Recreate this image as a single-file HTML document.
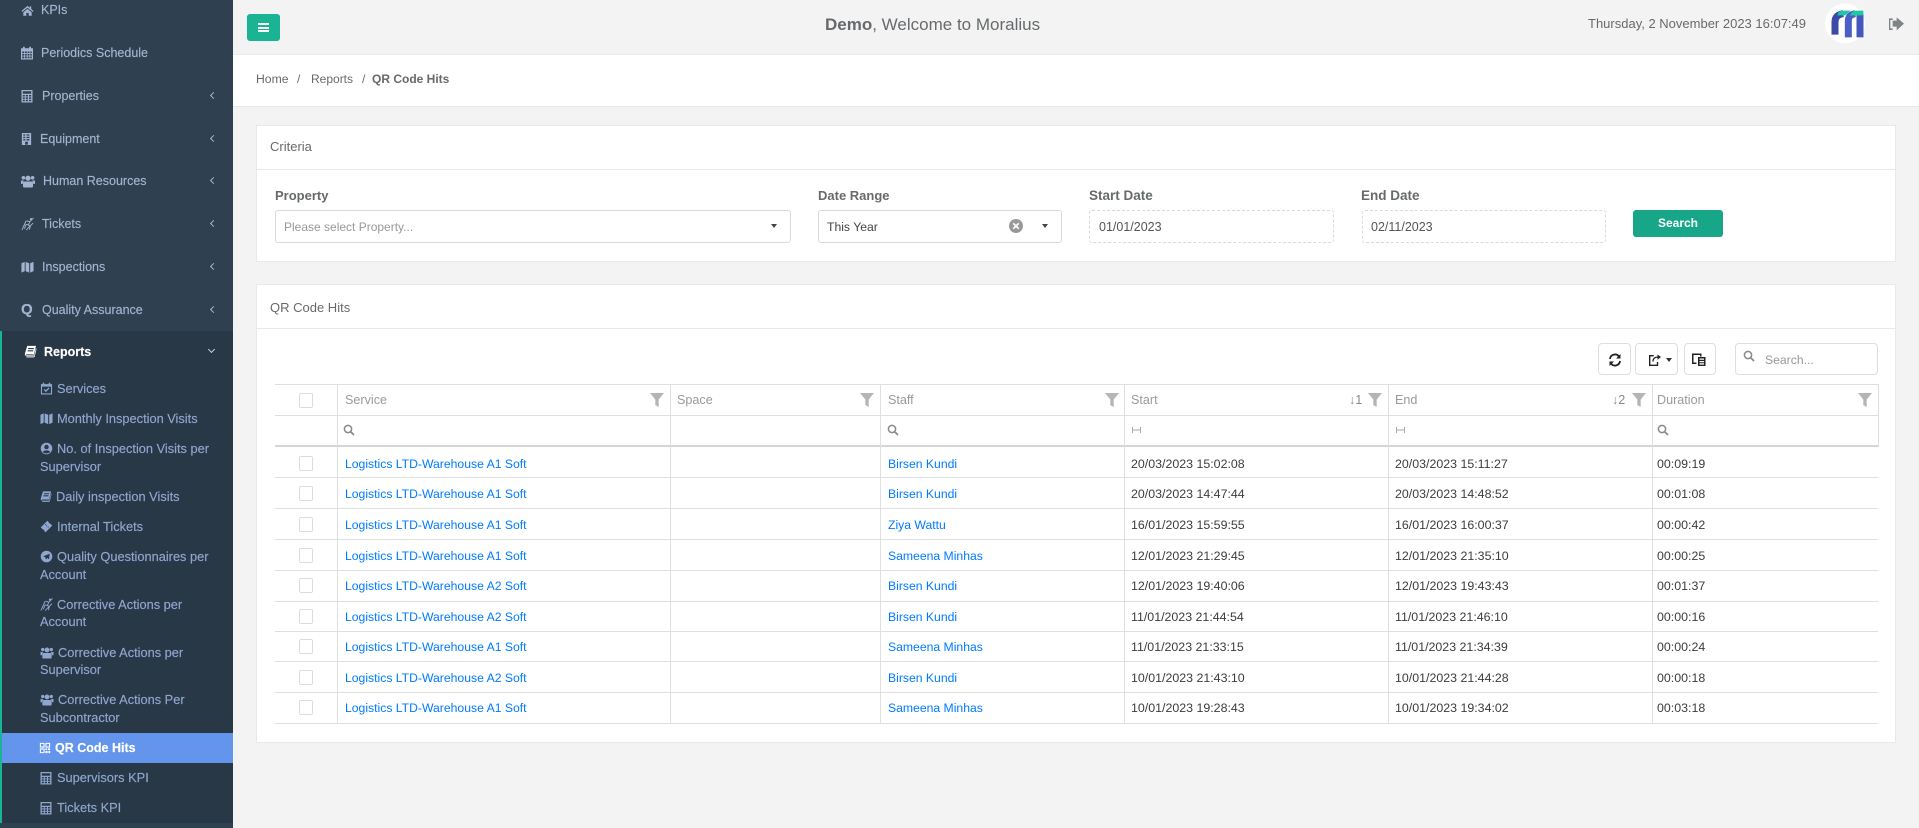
<!DOCTYPE html>
<html><head><meta charset="utf-8"><title>QR Code Hits</title>
<style>
*{box-sizing:border-box}
html,body{margin:0;padding:0;width:1919px;height:828px;overflow:hidden;background:#f3f3f4;font-family:"Liberation Sans",sans-serif;font-size:13px;color:#676a6c}
.a{position:absolute;white-space:nowrap}
svg{position:absolute;display:block;fill:currentColor}
#side{position:absolute;left:0;top:0;width:233px;height:828px;background:#2f4050;overflow:hidden}
#act{position:absolute;left:0;top:331px;width:233px;height:492px;background:#293846;border-left:2px solid #1ab394}
.m{position:absolute;white-space:nowrap;line-height:18px;color:#a3b4d0;font-size:12.5px;-webkit-text-stroke:.15px}
.s{position:absolute;white-space:nowrap;line-height:18px;color:#8fa6cf;font-size:12.8px;-webkit-text-stroke:.15px}
.ic{color:#a3b4d0}
.si{color:#8fa6cf}
.chev{position:absolute;left:211px;width:5px;height:5px;border-left:1.2px solid #a3b4d0;border-bottom:1.2px solid #a3b4d0;transform:rotate(45deg)}
.card{position:absolute;left:256px;width:1640px;background:#fff;border:1px solid #e7eaec}
.ch{position:absolute;left:0;right:0;top:0;border-bottom:1px solid #e7eaec}
.lbl{font-weight:bold;line-height:18px;top:187px}
.inp{position:absolute;background:#fff;top:210px;height:33px;border:1px solid #d9d9d9;border-radius:3px}
.dash{border:1px dashed #d9d9d9}
.caret{position:absolute;width:0;height:0;border-left:3.5px solid transparent;border-right:3.5px solid transparent;border-top:4px solid #444}
.v{position:absolute;top:384px;width:1px;height:340px;background:#dfdfdf}
.hl{position:absolute;left:275px;width:1603px;height:1px;background:#dfdfdf}
.th{position:absolute;top:390px;line-height:20px;color:#9a9a9a;white-space:nowrap;font-size:12.6px}
.f{color:#b5b5b5;width:14px;height:14px;top:393px}
.q{color:#8a8a8a;width:12px;height:12px;top:424px}
.r{position:absolute;left:0;width:1919px}
.r span{position:absolute;white-space:nowrap;line-height:18px;top:8px;color:#3c3c3c;font-size:12.4px}
.r span.l{color:#007bff;font-size:12.2px}
.r i{position:absolute;left:299px;top:9px;width:14px;height:15px;border:1px solid #dcdcdc;border-radius:2px;background:#fff}
.btn{position:absolute;top:343px;height:32px;border:1px solid #dedede;border-radius:4px;background:#fff}
</style></head><body>

<svg width="0" height="0" style="position:absolute">
<defs>
<symbol id="home" viewBox="0 0 14 14"><path d="M7 2L.5 7.500l.9 1L7 4l5.600 4.500.9-1L11 5.400V2.600H9.400v1.500zM2.500 9L7 5.300 11.500 9v3.600H8.300V9.600H5.700v3H2.500z"/></symbol>
<symbol id="cal" viewBox="0 0 14 14"><path fill-rule="evenodd" d="M3 .8h1.800V2.300h4.400V.8H11v1.500h2v11.200H1V2.300h2zM2.200 5.500v1.600h2V5.500zM5 5.500v1.600h1.800V5.500zM7.600 5.500v1.600h1.800V5.500zM10.200 5.500v1.600h1.600V5.500zM2.200 8v1.600h2V8zM5 8v1.600h1.800V8zM7.600 8v1.600h1.800V8zM10.200 8v1.600h1.600V8zM2.200 10.500v1.800h2v-1.800zM5 10.500v1.800h1.800v-1.800zM7.600 10.500v1.800h1.800v-1.800zM10.200 10.500v1.800h1.600v-1.800z"/></symbol>
<symbol id="calc" viewBox="0 0 14 14"><path fill-rule="evenodd" d="M1.500 1h11v12.500h-11zM2.800 2.300v2.400h8.400V2.300zM2.800 6v1.500h2V6zM5.800 6v1.500h2.200V6zM9 6v1.500h2.200V6zM2.800 8.400v1.500h2V8.400zM5.800 8.400v1.500h2.200V8.400zM9 8.400v1.500h2.200V8.400zM2.800 10.800v1.500h2v-1.500zM5.800 10.800v1.500h2.200v-1.500zM9 10.800v1.500h2.200v-1.500z"/></symbol>
<symbol id="bld" viewBox="0 0 14 14"><path fill-rule="evenodd" d="M2 .5h10v13H2zM3.500 2v1.400h2.200V2zM7 2v1.400h3.200V2zM3.500 4.600V6h2.200V4.600zM7 4.600V6h3.200V4.600zM3.500 7.200v1.400h2.200V7.200zM7 7.200v1.400h3.200V7.200zM5.500 10v3h3v-3z"/></symbol>
<symbol id="usr" viewBox="0 0 14 14"><circle cx="7" cy="4.200" r="2.600"/><circle cx="2.400" cy="3.800" r="1.800"/><circle cx="11.600" cy="3.800" r="1.800"/><path d="M3.300 7.500h7.400c.9 0 1.300.8 1.300 1.600v3.400c0 .5-.5 1-1 1H3c-.5 0-1-.5-1-1V9.100c0-.8.400-1.600 1.300-1.600zM0 6.500h2.700L1.500 10H0zM14 6.500h-2.700L12.500 10H14z"/></symbol>
<symbol id="ski" viewBox="0 0 14 14"><circle cx="10.800" cy="1.800" r="1.300"/><path fill="none" stroke="currentColor" stroke-width="1" d="M13.500.5L9.500 4.500 6 3.500M9.500 4.500L8 8l2 1.500-1 3.500M8 8L5.500 7.500 3.500 12M1 13.500l4.500-10M5.500 13.500L13 6"/></symbol>
<symbol id="map" viewBox="0 0 14 14"><path d="M.5 3L4 1.500v10L.5 13zM5 1.500L8.800 3v10L5 11.500zM9.900 3L13.500 1.500v10L9.900 13z"/></symbol>
<symbol id="book" viewBox="0 0 14 14"><path fill-rule="evenodd" d="M3.500 1H13l-.5 1.500-2 9H2.500c-1.500 0-1.800-1.300-1.500-2.500zM4.700 3.200l-.3 1.200h6l.3-1.200zM4.100 5.600l-.3 1.200h6l.3-1.200zM2.300 10.200c-.2.400.1.500.4.500h7.500l.2-.7H2.500zM12.800 3.500L13.500 4l-2 8.500c-.1.500-.5.800-1 .8H2.500v-1h8.300z"/></symbol>
<symbol id="calc2" viewBox="0 0 14 14"><path fill-rule="evenodd" d="M3 .8h1.600v1.500h4.800V.8H11v1.500h2v11.200H1V2.300h2zM2.200 5v7.300h9.600V5zM4 8.500l1-1 1.300 1.400 2.900-3 1 1-3.900 4z"/></symbol>
<symbol id="ucirc" viewBox="0 0 14 14"><path fill-rule="evenodd" d="M7 .8a6.200 6.200 0 1 1 0 12.400A6.200 6.200 0 0 1 7 .8zM7 3a2.400 2.400 0 1 0 0 4.800A2.400 2.400 0 0 0 7 3zM3 10.800c1 1 2.500 1.400 4 1.400s3-.4 4-1.400c-.6-1.200-2.200-1.800-4-1.800s-3.400.6-4 1.800z"/></symbol>
<symbol id="tick" viewBox="0 0 14 14"><path d="M.8 8L8 .8l1.500 1.500c-.4.800.3 1.600 1.100 1.200L13.200 6 6 13.200l-1.500-1.500c.4-.8-.3-1.600-1.100-1.200z"/><path d="M5.500 4.500l4 4" stroke="#293846" stroke-width="1" fill="none" stroke-dasharray="1 1"/></symbol>
<symbol id="tg" viewBox="0 0 14 14"><path fill-rule="evenodd" d="M7 .8a6.200 6.200 0 1 1 0 12.400A6.200 6.200 0 0 1 7 .8zM10.500 4L3.200 6.800l2.300.8.900 2.600 1.300-1.600 2 1.400z"/></symbol>
<symbol id="qr" viewBox="0 0 14 14"><path fill-rule="evenodd" d="M1 1h5.500v5.500H1zM2.200 2.200v3.100h3.100V2.200zM7.500 1H13v5.500H7.500zM8.700 2.200v3.100h3.100V2.200zM1 7.500h5.500V13H1zM2.200 8.700v3.100h3.100V8.700zM7.500 7.500h2v2h-2zM10.500 7.500H13v2h-2.500zM7.500 10.500H10V13H7.500zM11 10.500h2V13h-2z"/></symbol>
<symbol id="fil" viewBox="0 0 14 14"><path d="M0 0h14L8.700 6.500V14L5.300 12V6.500z"/></symbol>
<symbol id="srch" viewBox="0 0 12 12"><circle cx="5" cy="5" r="3.600" fill="none" stroke="currentColor" stroke-width="1.500"/><path d="M7.700 7.700L11 11" stroke="currentColor" stroke-width="1.800" fill="none"/></symbol>
</defs></svg>

<div id="side">
<div id="act"></div>
<div style="position:absolute;left:2px;top:733px;width:231px;height:30px;background:#6495ed"></div>

<svg class="ic" style="left:21px;top:4px" width="13" height="13"><use href="#home"/></svg><div class="m" style="left:41px;top:1px">KPIs</div>
<svg class="ic" style="left:20px;top:46px" width="14" height="14"><use href="#cal"/></svg><div class="m" style="left:41px;top:44px">Periodics Schedule</div>
<svg class="ic" style="left:20px;top:89px" width="14" height="14"><use href="#calc"/></svg><div class="m" style="left:42px;top:87px">Properties</div><div class="chev" style="top:92.5px"></div>
<svg class="ic" style="left:20px;top:132px" width="13" height="14"><use href="#bld"/></svg><div class="m" style="left:40px;top:130px">Equipment</div><div class="chev" style="top:135.500px"></div>
<svg class="ic" style="left:21px;top:174px" width="14" height="14"><use href="#usr"/></svg><div class="m" style="left:43px;top:172px">Human Resources</div><div class="chev" style="top:178px"></div>
<svg class="ic" style="left:21px;top:217px" width="13" height="14"><use href="#ski"/></svg><div class="m" style="left:42px;top:215px">Tickets</div><div class="chev" style="top:220.500px"></div>
<svg class="ic" style="left:21px;top:260px" width="13" height="14"><use href="#map"/></svg><div class="m" style="left:42px;top:258px">Inspections</div><div class="chev" style="top:263.500px"></div>
<div class="m" style="left:21px;top:301px;font-weight:bold;font-size:15px">Q</div><div class="m" style="left:42px;top:301px">Quality Assurance</div><div class="chev" style="top:306.500px"></div>

<svg style="left:24px;top:345px;color:#fff" width="13" height="13"><use href="#book"/></svg><div class="m" style="left:44px;top:343px;color:#fff;font-weight:bold;font-size:12.5px">Reports</div>
<div class="chev" style="left:209px;top:347px;transform:rotate(-45deg);border-color:#c8d2e4"></div>

<svg class="si" style="left:40px;top:382px" width="13" height="13"><use href="#calc2"/></svg><div class="s" style="left:57px;top:380px">Services</div>
<svg class="si" style="left:40px;top:412px" width="13" height="13"><use href="#map"/></svg><div class="s" style="left:57px;top:410px">Monthly Inspection Visits</div>
<svg class="si" style="left:40px;top:442px" width="13" height="13"><use href="#ucirc"/></svg><div class="s" style="left:57px;top:440px">No. of Inspection Visits per</div><div class="s" style="left:40px;top:458px">Supervisor</div>
<svg class="si" style="left:40px;top:490px" width="12" height="13"><use href="#book"/></svg><div class="s" style="left:56px;top:488px">Daily inspection Visits</div>
<svg class="si" style="left:40px;top:520px" width="13" height="13"><use href="#tick"/></svg><div class="s" style="left:57px;top:518px">Internal Tickets</div>
<svg class="si" style="left:40px;top:550px" width="13" height="13"><use href="#tg"/></svg><div class="s" style="left:57px;top:548px">Quality Questionnaires per</div><div class="s" style="left:40px;top:566px">Account</div>
<svg class="si" style="left:40px;top:598px" width="13" height="13"><use href="#ski"/></svg><div class="s" style="left:57px;top:596px">Corrective Actions per</div><div class="s" style="left:40px;top:613px">Account</div>
<svg class="si" style="left:40px;top:646px" width="14" height="13"><use href="#usr"/></svg><div class="s" style="left:58px;top:644px">Corrective Actions per</div><div class="s" style="left:40px;top:661px">Supervisor</div>
<svg class="si" style="left:40px;top:693px" width="14" height="13"><use href="#usr"/></svg><div class="s" style="left:58px;top:691px">Corrective Actions Per</div><div class="s" style="left:40px;top:709px">Subcontractor</div>
<svg style="left:39px;top:742px;color:#fff" width="12" height="12"><use href="#qr"/></svg><div class="s" style="left:55px;top:739px;color:#fff;font-weight:bold;font-size:12.5px">QR Code Hits</div>
<svg class="si" style="left:39px;top:771px" width="14" height="14"><use href="#calc"/></svg><div class="s" style="left:57px;top:769px">Supervisors KPI</div>
<svg class="si" style="left:39px;top:801px" width="14" height="14"><use href="#calc"/></svg><div class="s" style="left:57px;top:799px">Tickets KPI</div>
</div>

<!-- top bar -->
<div style="position:absolute;left:233px;top:54px;width:1686px;height:1px;background:#e7eaec"></div>
<div style="position:absolute;left:247px;top:14px;width:33px;height:27px;background:#1ab394;border-radius:3px"></div>
<div style="position:absolute;left:258px;top:23px;width:11px;height:2px;background:#fff"></div>
<div style="position:absolute;left:258px;top:27px;width:11px;height:2px;background:#fff"></div>
<div style="position:absolute;left:258px;top:30px;width:11px;height:2px;background:#fff"></div>
<div class="a" style="left:825px;top:15px;font-size:17px;line-height:20px;color:#676a6c"><b>Demo</b>, Welcome to Moralius</div>
<div class="a" style="left:1588px;top:15px;line-height:18px;color:#676a6c">Thursday, 2 November 2023 16:07:49</div>

<svg style="left:1780px;top:0" width="139" height="50" viewBox="0 0 417 150">
<defs><linearGradient id="g" x1="0" y1="0" x2="0" y2="1"><stop offset="0" stop-color="#4a63c8"/><stop offset="1" stop-color="#2c3a8e"/></linearGradient></defs>
<circle cx="195" cy="70" r="60" fill="#fff"/>
<path fill="none" stroke="#3a4aa6" stroke-width="21" d="M165 104V66Q165 44 190 41"/>
<path fill="none" stroke="#4a60c4" stroke-width="21" d="M205 112V62Q205 44 226 41"/>
<path fill="none" stroke="#4458bc" stroke-width="21" d="M240 112V42"/>
<path fill="#1fc8a4" d="M176 36Q184 32 192 32H212L196 46H172ZM216 36Q222 32 230 32H250V46H210Z"/>
<path fill="#7f8486" fill-rule="evenodd" d="M327 55H338V60H331V85H338V90H327ZM338 62H350V52L372 71 350 91V80H338Z"/>
</svg>

<!-- breadcrumb -->
<div style="position:absolute;left:233px;top:55px;width:1686px;height:52px;background:#fff;border-bottom:1px solid #e7eaec"></div>
<div class="a" style="left:256px;top:70px;line-height:18px;font-size:12.2px">Home</div>
<div class="a" style="left:297px;top:70px;line-height:18px;font-size:12px">/</div>
<div class="a" style="left:311px;top:70px;line-height:18px;font-size:12px">Reports</div>
<div class="a" style="left:362px;top:70px;line-height:18px;font-size:12px">/</div>
<div class="a" style="left:372px;top:70px;line-height:18px;font-size:12px;font-weight:bold">QR Code Hits</div>

<!-- criteria -->
<div class="card" style="top:125px;height:137px"><div class="ch" style="height:44px"></div></div>
<div class="a" style="left:270px;top:138px;line-height:18px">Criteria</div>
<div class="a lbl" style="left:275px">Property</div>
<div class="a lbl" style="left:818px">Date Range</div>
<div class="a lbl" style="left:1089px;font-size:13.5px">Start Date</div>
<div class="a lbl" style="left:1361px;font-size:13.5px">End Date</div>
<div class="inp" style="left:275px;width:516px"></div>
<div class="a" style="left:284px;top:218px;line-height:18px;color:#999;font-size:12px">Please select Property...</div>
<div class="caret" style="left:771px;top:224px"></div>
<div class="inp" style="left:818px;width:244px"></div>
<div class="a" style="left:827px;top:218px;line-height:18px;font-size:12.2px;color:#444">This Year</div>
<svg style="left:1009px;top:219px" width="14" height="14" viewBox="0 0 14 14"><circle cx="7" cy="7" r="7" fill="#999"/><path d="M4.300 4.300l5.400 5.400M9.700 4.300l-5.400 5.400" stroke="#fff" stroke-width="1.700"/></svg>
<div class="caret" style="left:1042px;top:224px"></div>
<div class="inp dash" style="left:1089px;width:245px"></div>
<div class="a" style="left:1099px;top:218px;line-height:18px;color:#555;font-size:12.5px">01/01/2023</div>
<div class="inp dash" style="left:1362px;width:244px"></div>
<div class="a" style="left:1371px;top:218px;line-height:18px;color:#555;font-size:12.5px">02/11/2023</div>
<div class="a" style="left:1633px;top:210px;width:90px;height:27px;background:#18a689;border-radius:3px;color:#fff;font-weight:bold;text-align:center;line-height:27px;font-size:12px">Search</div>

<!-- table card -->
<div class="card" style="top:284px;height:459px"><div class="ch" style="height:44px"></div></div>
<div class="a" style="left:270px;top:299px;line-height:18px">QR Code Hits</div>

<!-- toolbar -->
<div class="btn" style="left:1598px;width:33px"></div>
<svg style="left:1608px;top:353px;color:#222" width="14" height="14" viewBox="0 0 14 14"><path fill="none" stroke="currentColor" stroke-width="1.800" d="M2 6A5 5 0 0 1 11 3.500M12 8A5 5 0 0 1 3 10.500"/><path d="M12.500 1v4.500H8zM1.500 13V8.500H6z"/></svg>
<div class="btn" style="left:1635px;width:43px"></div>
<svg style="left:1648px;top:353px;color:#222" width="14" height="14" viewBox="0 0 14 14"><path fill="none" stroke="currentColor" stroke-width="1.400" d="M9.500 9v3.300H1.700V2.700h4"/><path fill="none" stroke="currentColor" stroke-width="1.300" d="M5 8.500C5 5.500 7 4 10 4"/><path d="M9.500 1.500L13 4 9.500 6.800z"/></svg>
<div class="caret" style="left:1666px;top:358px;border-top-color:#333"></div>
<div class="btn" style="left:1684px;width:32px"></div>
<svg style="left:1691px;top:352px;color:#222" width="16" height="15" viewBox="0 0 16 15"><path fill-rule="evenodd" d="M1 1.500h9.500v3H9V3H2.500v7.500h3V12H1z"/><path fill-rule="evenodd" d="M7 5h7.500v9H7zM8.500 6.500v1.300h4.500V6.500zM8.500 9v1.300h4.500V9zM8.500 11.300v1.300h4.500v-1.300z"/></svg>
<div class="btn" style="left:1735px;width:143px"></div>
<svg style="left:1743px;top:350px;color:#8a8a8a" width="12" height="12"><use href="#srch"/></svg>
<div class="a" style="left:1765px;top:351px;line-height:18px;color:#999;font-size:12.2px">Search...</div>

<!-- table lines -->
<div class="hl" style="top:384px"></div>
<div class="hl" style="top:415px"></div>
<div class="hl" style="top:445px;height:2px;background:#d6d6d6"></div>
<div class="hl" style="top:477px"></div>
<div class="hl" style="top:508px"></div>
<div class="hl" style="top:539px"></div>
<div class="hl" style="top:570px"></div>
<div class="hl" style="top:601px"></div>
<div class="hl" style="top:631px"></div>
<div class="hl" style="top:661px"></div>
<div class="hl" style="top:692px"></div>
<div class="hl" style="top:723px"></div>
<div class="v" style="left:337px"></div>
<div class="v" style="left:670px"></div>
<div class="v" style="left:880px"></div>
<div class="v" style="left:1124px"></div>
<div class="v" style="left:1388px"></div>
<div class="v" style="left:1652px"></div>
<div class="v" style="left:1878px;height:63px"></div>

<!-- header -->
<div class="a" style="left:299px;top:393px;width:14px;height:15px;border:1px solid #dcdcdc;border-radius:2px;background:#fff"></div>
<div class="th" style="left:345px">Service</div><svg class="f" style="left:650px"><use href="#fil"/></svg>
<div class="th" style="left:677px">Space</div><svg class="f" style="left:860px"><use href="#fil"/></svg>
<div class="th" style="left:888px">Staff</div><svg class="f" style="left:1105px"><use href="#fil"/></svg>
<div class="th" style="left:1131px">Start</div><div class="th" style="left:1349px;color:#888">↓1</div><svg class="f" style="left:1368px"><use href="#fil"/></svg>
<div class="th" style="left:1395px">End</div><div class="th" style="left:1612px;color:#888">↓2</div><svg class="f" style="left:1632px"><use href="#fil"/></svg>
<div class="th" style="left:1657px">Duration</div><svg class="f" style="left:1858px"><use href="#fil"/></svg>
<svg class="q" style="left:343px"><use href="#srch"/></svg>
<svg class="q" style="left:887px"><use href="#srch"/></svg>
<svg class="q" style="left:1657px"><use href="#srch"/></svg>
<svg style="left:1132px;top:427px;color:#aaa" width="9" height="6" viewBox="0 0 9 6"><path d="M.5 0v6M8.500 0v6M.5 3h8" stroke="currentColor" fill="none"/></svg>
<svg style="left:1396px;top:427px;color:#aaa" width="9" height="6" viewBox="0 0 9 6"><path d="M.5 0v6M8.500 0v6M.5 3h8" stroke="currentColor" fill="none"/></svg>

<!-- rows -->
<div class="r" style="top:447px"><i></i><span class="l" style="left:345px">Logistics LTD-Warehouse A1 Soft</span><span class="l" style="left:888px">Birsen Kundi</span><span style="left:1131px">20/03/2023 15:02:08</span><span style="left:1395px">20/03/2023 15:11:27</span><span style="left:1657px">00:09:19</span></div>
<div class="r" style="top:477px"><i></i><span class="l" style="left:345px">Logistics LTD-Warehouse A1 Soft</span><span class="l" style="left:888px">Birsen Kundi</span><span style="left:1131px">20/03/2023 14:47:44</span><span style="left:1395px">20/03/2023 14:48:52</span><span style="left:1657px">00:01:08</span></div>
<div class="r" style="top:508px"><i></i><span class="l" style="left:345px">Logistics LTD-Warehouse A1 Soft</span><span class="l" style="left:888px">Ziya Wattu</span><span style="left:1131px">16/01/2023 15:59:55</span><span style="left:1395px">16/01/2023 16:00:37</span><span style="left:1657px">00:00:42</span></div>
<div class="r" style="top:539px"><i></i><span class="l" style="left:345px">Logistics LTD-Warehouse A1 Soft</span><span class="l" style="left:888px">Sameena Minhas</span><span style="left:1131px">12/01/2023 21:29:45</span><span style="left:1395px">12/01/2023 21:35:10</span><span style="left:1657px">00:00:25</span></div>
<div class="r" style="top:569px"><i></i><span class="l" style="left:345px">Logistics LTD-Warehouse A2 Soft</span><span class="l" style="left:888px">Birsen Kundi</span><span style="left:1131px">12/01/2023 19:40:06</span><span style="left:1395px">12/01/2023 19:43:43</span><span style="left:1657px">00:01:37</span></div>
<div class="r" style="top:600px"><i></i><span class="l" style="left:345px">Logistics LTD-Warehouse A2 Soft</span><span class="l" style="left:888px">Birsen Kundi</span><span style="left:1131px">11/01/2023 21:44:54</span><span style="left:1395px">11/01/2023 21:46:10</span><span style="left:1657px">00:00:16</span></div>
<div class="r" style="top:630px"><i></i><span class="l" style="left:345px">Logistics LTD-Warehouse A1 Soft</span><span class="l" style="left:888px">Sameena Minhas</span><span style="left:1131px">11/01/2023 21:33:15</span><span style="left:1395px">11/01/2023 21:34:39</span><span style="left:1657px">00:00:24</span></div>
<div class="r" style="top:661px"><i></i><span class="l" style="left:345px">Logistics LTD-Warehouse A2 Soft</span><span class="l" style="left:888px">Birsen Kundi</span><span style="left:1131px">10/01/2023 21:43:10</span><span style="left:1395px">10/01/2023 21:44:28</span><span style="left:1657px">00:00:18</span></div>
<div class="r" style="top:691px"><i></i><span class="l" style="left:345px">Logistics LTD-Warehouse A1 Soft</span><span class="l" style="left:888px">Sameena Minhas</span><span style="left:1131px">10/01/2023 19:28:43</span><span style="left:1395px">10/01/2023 19:34:02</span><span style="left:1657px">00:03:18</span></div>

</body></html>
